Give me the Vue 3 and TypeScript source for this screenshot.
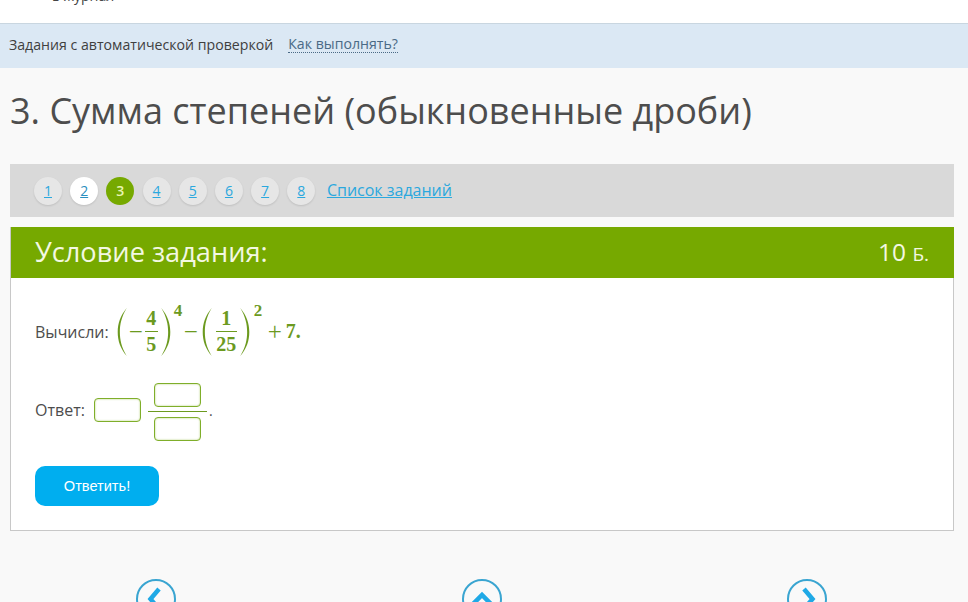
<script setup lang="ts">
const nums: number[] = [1, 2, 3, 4, 5, 6, 7, 8]
</script>

<template>
  <div class="page">
    <header class="top"><span class="crumb">в журнал</span></header>
    <div class="infobar">
      <span>Задания с автоматической проверкой</span>
      <a class="how">Как выполнять?</a>
    </div>
    <h1 class="title">3. Сумма степеней (обыкновенные дроби)</h1>
    <nav class="pager">
      <a
        v-for="n in nums"
        :key="n"
        class="num"
        :class="{ visited: n === 2, current: n === 3 }"
      >{{ n }}</a>
      <a class="list">Список заданий</a>
    </nav>
    <section class="card">
      <div class="card-head">
        <span class="cond">Условие задания:</span>
        <span class="pts">10 <small>Б.</small></span>
      </div>
      <div class="card-body">
        <div class="task">
          <span class="label">Вычисли:</span>
          <span class="math">
            <svg class="paren" viewBox="0 0 14 52" preserveAspectRatio="none"><path d="M12.500 1C5 9 2 17 2 26s3 17 10.500 25C6.500 42 4.500 34 4.500 26S6.500 10 12.500 1z" /></svg>
            <span class="op minus1">−</span>
            <span class="frac"><span>4</span><i></i><span>5</span></span>
            <svg class="paren r1" viewBox="0 0 14 52" preserveAspectRatio="none"><path d="M1.500 1C9 9 12 17 12 26s-3 17-10.500 25C7.500 42 9.500 34 9.500 26S7.500 10 1.500 1z" /></svg>
            <sup class="pow p1">4</sup>
            <span class="op minus2">−</span>
            <svg class="paren l2" viewBox="0 0 14 52" preserveAspectRatio="none"><path d="M12.500 1C5 9 2 17 2 26s3 17 10.500 25C6.500 42 4.500 34 4.500 26S6.500 10 12.500 1z" /></svg>
            <span class="frac wide"><span>1</span><i></i><span>25</span></span>
            <svg class="paren r1" viewBox="0 0 14 52" preserveAspectRatio="none"><path d="M1.500 1C9 9 12 17 12 26s-3 17-10.500 25C7.500 42 9.500 34 9.500 26S7.500 10 1.500 1z" /></svg>
            <sup class="pow p2">2</sup>
            <span class="op plus">+</span>
            <span class="seven">7.</span>
          </span>
        </div>
        <div class="answer">
          <span class="label raised">Ответ:</span>
          <span class="inp whole"></span>
          <span class="afrac">
            <span class="inp"></span>
            <i></i>
            <span class="inp"></span>
          </span>
          <span class="dot">.</span>
        </div>
        <button class="submit" type="button">Ответить!</button>
      </div>
    </section>
    <div class="bottom">
      <a class="circle">
        <svg viewBox="0 0 40 40" width="40" height="40"><path d="M23 10l-8.500 10 8.500 10" /></svg>
      </a>
      <a class="circle">
        <svg viewBox="0 0 40 40" width="40" height="40"><path d="M11 25l9-9 9 9" /></svg>
      </a>
      <a class="circle">
        <svg viewBox="0 0 40 40" width="40" height="40"><path d="M17 10l8.500 10-8.500 10" /></svg>
      </a>
    </div>
  </div>
</template>

<style>
html, body { margin: 0; background: #f9f9f9; }
</style>

<style scoped>
.page {
  width: 968px;
  height: 602px;
  overflow: hidden;
  background: #f9f9f9;
  font-family: "Open Sans", "Noto Sans", sans-serif;
  color: #4d4d4d;
}
.top {
  height: 23px;
  background: #fff;
  border-bottom: 1px solid #c9d6e0;
  display: flex;
  align-items: flex-end;
  padding-left: 52px;
  overflow: hidden;
}
.crumb {
  font-size: 14px;
  line-height: 19px;
  margin-bottom: 18px;
  color: #444;
}
.infobar {
  height: 40px;
  padding: 0 0 4px 9px;
  background: #dbe8f4;
  display: flex;
  align-items: center;
  gap: 15px;
  font-size: 14.15px;
  color: #3f3f3f;
}
.how {
  color: #4a6a86;
  line-height: 17px;
  border-bottom: 1px dotted #4a6a86;
}
.title {
  margin: 17px 0 0 10px;
  height: 79px;
  font-size: 36px;
  line-height: 52px;
  font-weight: 400;
  color: #4d4d4d;
}
.pager {
  height: 53px;
  margin: 0 14px 0 10px;
  background: #d9d9d9;
  display: flex;
  align-items: center;
  padding-left: 24px;
  gap: 8.2px;
}
.num {
  width: 28px;
  height: 28px;
  border-radius: 50%;
  background: #e6e6e6;
  box-shadow: 0 1px 2px rgba(0, 0, 0, 0.12);
  display: flex;
  align-items: center;
  justify-content: center;
  font-size: 14px;
  color: #2ba8de;
  text-decoration: underline;
}
.num.visited { background: #fff; color: #2a8fc0; }
.num.current {
  background: #76a900;
  color: #e8f5b0;
  font-weight: 600;
  text-decoration: none;
  box-shadow: none;
}
.list {
  margin: 0 0 2px 3.400px;
  font-size: 16px;
  color: #2ba8de;
  text-decoration: underline;
}
.card {
  margin: 10px 14px 0 10px;
  border: 1px solid #c8c8c8;
  border-top: 0;
  background: #fff;
  height: 303px;
}
.card-head {
  height: 51px;
  background: #76a900;
  display: flex;
  align-items: center;
  justify-content: space-between;
  padding: 0 25px 0 24px;
  color: #fff;
  margin-right: -1px;
}
.cond { font-size: 27.2px; line-height: 49px; margin-bottom: 2px; color: #f3f8e2; }
.pts { font-size: 24.5px; margin-bottom: 2px; color: #f3f8e2; }
.pts small { font-size: 19px; }
.card-body { padding: 0 24px; }
.task {
  height: 101px;
  padding-top: 3px;
  margin-bottom: 1px;
  display: flex;
  align-items: center;
  font-size: 16px;
}
.label { color: #4d4d4d; }
.task .label { margin-top: 1px; }
.raised { margin-bottom: 4px; }
.math {
  margin-left: 7px;
  display: flex;
  align-items: center;
  font-family: "Liberation Serif", "DejaVu Serif", serif;
  font-weight: 700;
  font-size: 20px;
  color: #6c9a1f;
}
.paren { flex: none; width: 12px; height: 50px; fill: #6c9a1f; }
.r1 { margin-left: 2px; }
.l2 { margin-left: 3px; }
.op {
  font-weight: 400;
  font-size: 25px;
  line-height: 24px;
  text-align: center;
}
.minus1 { width: 16px; }
.minus2 { width: 14px; }
.plus { margin-left: 3px; width: 16px; }
.frac {
  display: flex;
  flex-direction: column;
  align-items: center;
  width: 13px;
  margin-left: 1px;
  line-height: 25px;
}
.frac i {
  display: block;
  align-self: stretch;
  height: 1px;
  background: #6c9a1f;
}
.frac.wide { width: 21px; margin-left: 3px; }
.pow {
  align-self: flex-start;
  margin: -4px 0 0 0;
  width: 10px;
  font-size: 17px;
  line-height: 18px;
}
.p1 { margin-left: 2px; }
.p2 { margin-left: 3px; }
.seven { margin-left: 3px; }
.answer {
  height: 58px;
  display: flex;
  align-items: center;
  font-size: 16px;
}
.inp {
  display: block;
  width: 45px;
  height: 22px;
  border: 1px solid #7fae2a;
  border-radius: 4px;
  background: #fff;
  box-shadow: inset 0 0 2px rgba(118, 169, 0, 0.6);
}
.whole { margin: 0 7px 4px 9px; }
.afrac {
  display: flex;
  flex-direction: column;
  align-items: center;
  width: 59px;
  gap: 4px;
}
.afrac i {
  display: block;
  align-self: stretch;
  height: 1px;
  margin-bottom: 1px;
  background: #6c9a1f;
}
.dot { margin: 0 0 4px 2px; color: #4d4d4d; font-size: 14px; }
.submit {
  display: block;
  margin-top: 25px;
  width: 124px;
  height: 40px;
  border: 0;
  border-radius: 10px;
  background: #00aeef;
  color: #fff;
  font-family: "Liberation Sans", Arial, sans-serif;
  font-size: 14.6px;
  padding: 0 0 1px;
}
.bottom {
  margin-top: 48px;
  display: flex;
  justify-content: space-between;
  padding: 0 141px 0 136px;
}
.circle {
  width: 40px;
  height: 40px;
  flex: none;
  border-radius: 50%;
  box-sizing: border-box;
  border: 2.500px solid #3aa5d1;
  display: flex;
  align-items: center;
  justify-content: center;
}
.circle svg { flex: none; fill: none; stroke: #1fa9e6; stroke-width: 4.500; }
</style>
